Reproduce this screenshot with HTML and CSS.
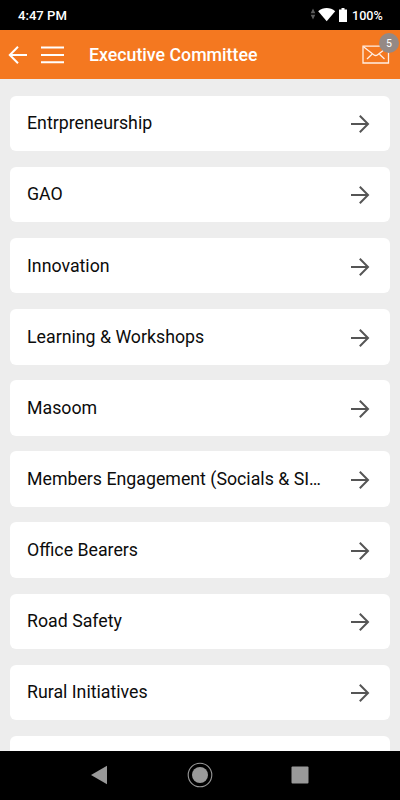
FILE: index.html
```html
<!DOCTYPE html>
<html lang="en">
<head>
<meta charset="utf-8">
<title>Executive Committee</title>
<link rel="stylesheet" href="styles.css">
</head>
<body>
<svg class="defs" width="0" height="0" aria-hidden="true">
  <symbol id="arrow" viewBox="0 0 20 20"><path d="M1 10H18M9.8 1.8 18 10 9.8 18.2" fill="none" stroke="#555" stroke-width="2"/></symbol>
</svg>
<div class="screen">
  <div class="status">
    <span class="time">4:47 PM</span>
    <svg class="status-icons" width="40" height="16" viewBox="0 0 40 16">
      <path d="M.7 6.3 3 1.5l2.3 4.8zM.7 7.7h4.600L3 12.5z" fill="#5c5c5c"/>
      <path d="M8.2 4.2C13.2 0 20.2 0 25.2 4.2L16.700 14.3z" fill="#fff"/>
      <path d="M29 2.5h2.500V1h3v1.500H37v12.500h-8z" fill="#fff"/>
    </svg>
    <span class="percent">100%</span>
  </div>
  <header class="bar">
    <svg class="back" width="20" height="20" viewBox="0 0 20 20"><path d="M19 10H2M10 1.800 1.800 10l8.200 8.200" fill="none" stroke="#fff" stroke-width="2"/></svg>
    <svg class="menu" width="23" height="18" viewBox="0 0 23 18"><path d="M0 1.500h23M0 9h23M0 16.200h23" stroke="#fff" stroke-width="2"/></svg>
    <h1 class="title">Executive Committee</h1>
    <div class="mail">
      <svg width="28" height="20" viewBox="0 0 28 20"><g fill="none" stroke="#ffeee4" stroke-width="1.300"><path d="M1 1.200h25.500v16.800H1z"/><path d="m1.500 1.700 10.200 8q2 1.600 4 0l10.300-8M5 14l5-4.700M22.500 14l-5-4.700"/></g></svg>
      <span class="badge">5</span>
    </div>
  </header>
  <main class="list">
    <div class="card"><span class="name">Entrpreneurship</span><svg class="arrow"><use href="#arrow"/></svg></div>
    <div class="card"><span class="name">GAO</span><svg class="arrow"><use href="#arrow"/></svg></div>
    <div class="card"><span class="name">Innovation</span><svg class="arrow"><use href="#arrow"/></svg></div>
    <div class="card"><span class="name">Learning &amp; Workshops</span><svg class="arrow"><use href="#arrow"/></svg></div>
    <div class="card"><span class="name">Masoom</span><svg class="arrow"><use href="#arrow"/></svg></div>
    <div class="card"><span class="name">Members Engagement (Socials &amp; SI…</span><svg class="arrow"><use href="#arrow"/></svg></div>
    <div class="card"><span class="name">Office Bearers</span><svg class="arrow"><use href="#arrow"/></svg></div>
    <div class="card"><span class="name">Road Safety</span><svg class="arrow"><use href="#arrow"/></svg></div>
    <div class="card"><span class="name">Rural Initiatives</span><svg class="arrow"><use href="#arrow"/></svg></div>
    <div class="card"></div>
  </main>
  <nav class="nav">
    <svg width="18" height="20" viewBox="0 0 18 20"><path d="M1 10 17 .8v18.400z" fill="#999"/></svg>
    <svg width="26" height="26" viewBox="0 0 26 26"><circle cx="13" cy="13" r="11.800" fill="none" stroke="#999" stroke-width="1.100"/><circle cx="13" cy="13" r="8" fill="#999"/></svg>
    <svg width="18" height="18" viewBox="0 0 18 18"><rect x=".5" y=".5" width="17" height="17" rx="1" fill="#999"/></svg>
  </nav>
</div>
</body>
</html>
```
FILE: styles.css
```css
* { box-sizing: border-box; }
body { margin: 0; font-family: Roboto, "Liberation Sans", sans-serif; }
svg { display: block; flex: none; }
.defs { position: absolute; }
.screen { width: 400px; height: 800px; display: flex; flex-direction: column; overflow: hidden; background: #ededed; }
.status { height: 30px; flex: none; background: #000; color: #fff; display: flex; align-items: center; padding: 2px 17px 0 18px; font-weight: 500; }
.time { font-size: 13.100px; line-height: 16px; }
.status-icons { margin: -2px 2px 0 auto; }
.percent { font-size: 12.600px; line-height: 16px; width: 31px; white-space: nowrap; }
.bar { height: 49px; flex: none; background: #f47820; color: #fff; display: flex; align-items: center; padding: 0 10px 0 8px; }
.menu { margin-left: 13px; }
.title { margin: 1px 0 0 25px; font-size: 17.750px; line-height: 24px; font-weight: 500; flex: 1; white-space: nowrap; }
.mail { position: relative; }
.badge { position: absolute; left: 17px; top: -12px; width: 20px; height: 20px; border-radius: 50%; background: #948985; font-size: 10.500px; line-height: 21px; text-align: center; }
.list { height: 672px; flex: none; padding: 16.600px 10px 0; display: flex; flex-direction: column; gap: 15.650px; overflow: hidden; }
.card { height: 55.500px; flex: none; background: #fff; border-radius: 6px; display: flex; align-items: center; justify-content: space-between; padding: 0 20px 0 17px; }
.name { color: #0c0c0c; font-size: 17.750px; line-height: 24px; white-space: nowrap; }
.arrow { width: 20px; height: 20px; margin-top: 2px; }
.nav { height: 49px; flex: none; background: #000; display: flex; align-items: center; justify-content: space-between; padding: 0 91px 1px 90px; }
```
